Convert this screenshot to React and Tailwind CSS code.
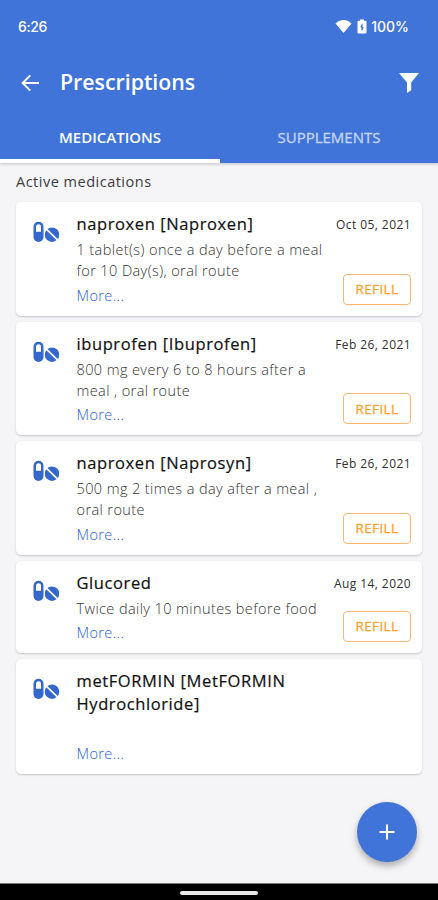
const medications = [
  {
    name: "naproxen [Naproxen]",
    directions: "1 tablet(s) once a day before a meal for 10 Day(s), oral route",
    date: "Oct 05, 2021",
  },
  {
    name: "ibuprofen [Ibuprofen]",
    directions: "800 mg every 6 to 8 hours after a meal , oral route",
    date: "Feb 26, 2021",
  },
  {
    name: "naproxen [Naprosyn]",
    directions: "500 mg 2 times a day after a meal , oral route",
    date: "Feb 26, 2021",
  },
  {
    name: "Glucored",
    directions: "Twice daily 10 minutes before food",
    date: "Aug 14, 2020",
  },
  {
    name: "metFORMIN [MetFORMIN Hydrochloride]",
    directions: "",
    date: null,
  },
];

function PillsIcon() {
  return (
    <svg width="27" height="22" viewBox="0 0 27 22" className="shrink-0" aria-hidden="true">
      <rect x="0.5" y="0.8" width="10" height="20.2" rx="5" fill="#3468cd" />
      <path d="M3 10.8V5.7a2.5 2.5 0 0 1 5 0v5.1z" fill="#fff" />
      <circle cx="19" cy="13.7" r="7.2" fill="#3468cd" />
      <path d="M12.8 7.7l12.4 12" stroke="#fff" strokeWidth="1.7" />
    </svg>
  );
}

function StatusBar() {
  return (
    <div className="flex h-[53px] items-center pl-[18px] pr-[29px] font-['Inter','Open_Sans',sans-serif] text-[14px] font-medium">
      <span className="tracking-[-0.4px]">6:26</span>
      <div className="flex-1" />
      <svg width="17" height="15" viewBox="0 0 17 15" className="mr-[5px]" aria-hidden="true">
        <path d="M1 4.5C5 0.6 12 0.6 16 4.5L8.5 13.4z" fill="#fff" stroke="#fff" strokeLinejoin="round" />
      </svg>
      <svg width="10" height="15" viewBox="0 0 10 15" className="mr-[4px]" aria-hidden="true">
        <path d="M3 0.5h4v1.3h1.2q1.3 0 1.3 1.3v10.1q0 1.3-1.3 1.3H1.8q-1.3 0-1.3-1.3V3.1q0-1.3 1.3-1.3H3z" fill="#fff" />
        <path d="M5 4.6L3.4 8.2h1v3.1h1.2l1-3.4h-1V4.6z" fill="#4074d8" />
      </svg>
      <span>100%</span>
    </div>
  );
}

function Header() {
  return (
    <header className="relative z-10 h-[163px] bg-[#4074d8] text-white shadow-[0_1px_3px_rgba(0,0,0,0.22)]">
      <StatusBar />
      <div className="flex h-[60px] items-center pl-[21px] pr-[19px]">
        <button aria-label="Back">
          <svg width="19" height="18" viewBox="0 0 19 18" fill="none" stroke="#fff" strokeWidth="1.9" aria-hidden="true">
            <path d="M18 9H2M9.3 1.3L1.6 9l7.7 7.7" />
          </svg>
        </button>
        <h1 className="mb-[2px] ml-[20px] text-[21.3px] font-semibold">Prescriptions</h1>
        <div className="flex-1" />
        <button aria-label="Filter">
          <svg width="20" height="20" viewBox="0 0 20 20" fill="#fff" aria-hidden="true">
            <path d="M0 0H20L12.2 9.5V17.3L8 20V9.5z" />
          </svg>
        </button>
      </div>
      <nav className="flex h-[50px] text-[15px]">
        <button className="w-[220px] border-b-4 border-white pt-[3px] font-semibold">MEDICATIONS</button>
        <button className="flex-1 border-b-4 border-transparent pt-[3px] text-[#c6d6f6] [-webkit-text-stroke:0.3px]">
          SUPPLEMENTS
        </button>
      </nav>
    </header>
  );
}

function MedicationCard({ med }) {
  return (
    <article className="flex rounded-[5px] bg-white pb-[9px] pl-[17px] pr-[11px] pt-[10px] shadow-[0_1px_2px_rgba(0,0,0,0.2)]">
      <div className="w-[43.5px] shrink-0 pt-[9px]">
        <PillsIcon />
      </div>
      <div className="w-[252px] shrink-0">
        <h2 className="text-[16.5px] leading-[23px] tracking-[0.6px] text-[#111] [-webkit-text-stroke:0.2px]">{med.name}</h2>
        <p className="mt-[4px] min-h-[21.3px] text-[14.5px] font-light leading-[21.3px] tracking-[0.4px] text-[#333]">{med.directions}</p>
        <a className="mt-[3px] block text-[14.5px] font-light leading-[22px] tracking-[0.4px] text-[#2a60d8]">More...</a>
      </div>
      {med.date && (
        <div className="flex flex-1 flex-col items-end justify-between whitespace-nowrap">
          <time className="pt-[2px] text-[12px] leading-[22px] tracking-[0.42px] text-[#303030]">{med.date}</time>
          <button className="mb-[2px] h-[31px] w-[68px] rounded-[4px] border border-[#fdb572] text-[13.5px] tracking-[0.4px] text-[#fba336] [-webkit-text-stroke:0.3px]">
            REFILL
          </button>
        </div>
      )}
    </article>
  );
}

export default function App() {
  return (
    <div className="flex h-[900px] w-[438px] flex-col overflow-hidden bg-[#f5f5f8] font-['Open_Sans','Noto_Sans',sans-serif]">
      <Header />
      <main className="relative flex-1 px-4">
        <p className="h-[39px] pt-[8px] text-[14.5px] leading-[22px] tracking-[0.5px] text-[#3c3c3e]">Active medications</p>
        <div className="flex flex-col gap-[6px]">
          {medications.map((med) => (
            <MedicationCard key={med.name} med={med} />
          ))}
        </div>
        <button
          aria-label="Add prescription"
          className="absolute bottom-[21px] right-[21px] grid size-[60px] place-items-center rounded-full bg-[#4074d8] shadow-[0_4px_7px_rgba(0,0,0,0.3)]"
        >
          <svg width="16" height="16" viewBox="0 0 16 16" stroke="#fff" strokeWidth="2" aria-hidden="true">
            <path d="M8 0.5v15M0.5 8h15" />
          </svg>
        </button>
      </main>
      <footer className="flex h-[17px] justify-center border-t border-[#777] bg-black pt-[7px]">
        <div className="h-[4px] w-[78px] rounded-full bg-[#e8e8e8]" />
      </footer>
    </div>
  );
}
